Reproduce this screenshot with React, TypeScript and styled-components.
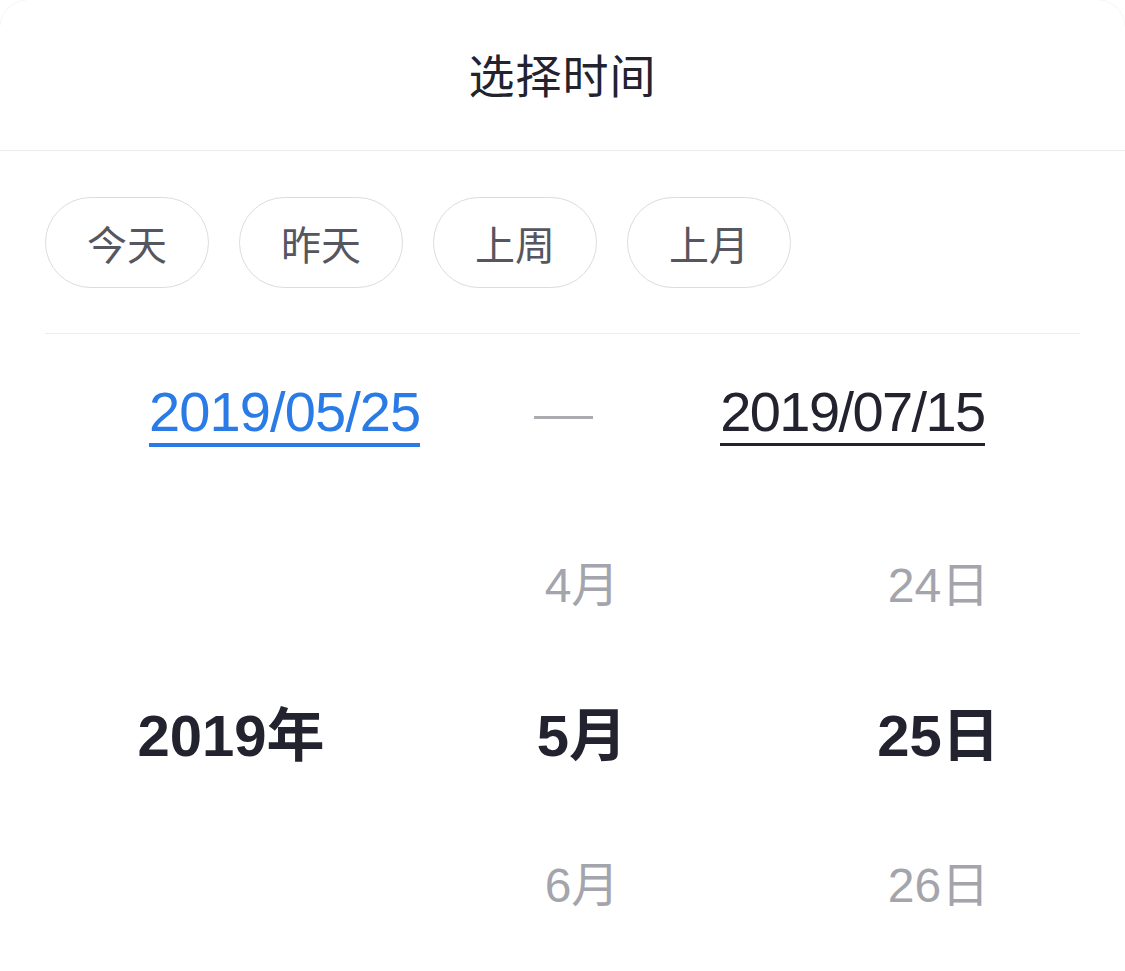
import React from "react";
import styled, { createGlobalStyle } from "styled-components";

const GlobalStyle = createGlobalStyle`
  html, body {
    margin: 0;
    padding: 0;
    background: #ffffff;
  }
  body {
    font-family: "Liberation Sans", "Noto Sans CJK SC", sans-serif;
    -webkit-font-smoothing: antialiased;
  }
`;

const Card = styled.div`
  width: 1125px;
  min-height: 971px;
  background: #ffffff;
  border-radius: 28px 28px 0 0;
  box-shadow: 0 0 1.5px rgba(0, 0, 0, 0.12);
  overflow: hidden;
`;

const Header = styled.header`
  height: 150px;
  display: flex;
  align-items: center;
  justify-content: center;
  border-bottom: 1px solid #ececee;
`;

const Title = styled.h1`
  margin: 0 0 4px;
  font-size: 46px;
  font-weight: 400;
  color: #22232e;
  letter-spacing: 1px;
`;

const Body = styled.div`
  padding: 0 45px;
`;

const ChipRow = styled.div`
  display: flex;
  gap: 30px;
  padding: 46px 0 45px;
  border-bottom: 1px solid #ececee;
`;

const Chip = styled.button`
  width: 164px;
  height: 91px;
  border: 1px solid #dcdcdf;
  border-radius: 46px;
  background: #ffffff;
  display: flex;
  align-items: center;
  justify-content: center;
  font-family: "Liberation Sans", "Noto Sans CJK SC", sans-serif;
  font-size: 40px;
  color: #55565f;
  padding: 0;
  cursor: pointer;
`;

const RangeRow = styled.div`
  display: flex;
  align-items: flex-start;
  justify-content: flex-start;
  padding: 51px 0 0 104px;
`;

const DateField = styled.div<{ $active?: boolean }>`
  font-size: 56px;
  line-height: 54px;
  letter-spacing: ${(p) => (p.$active ? "-0.9px" : "-1.6px")};
  color: ${(p) => (p.$active ? "#2a7be6" : "#22232e")};
  padding-bottom: 4px;
  border-bottom: ${(p) => (p.$active ? "4px solid #2a7be6" : "3px solid #22232e")};
`;

const Dash = styled.div`
  width: 59px;
  height: 3px;
  background: #ababb0;
  margin: 31px 127px 0 114px;
`;

const Wheel = styled.div`
  display: grid;
  grid-template-columns: 462px 240px 1fr;
  margin-top: 64px;
`;

const WheelColumn = styled.div<{ $offset?: number }>`
  display: flex;
  flex-direction: column;
  padding-left: ${(p) => p.$offset ?? 0}px;
`;

const WheelItem = styled.div<{ $selected?: boolean }>`
  height: 150px;
  line-height: 150px;
  text-align: center;
  white-space: nowrap;
  font-size: ${(p) => (p.$selected ? "58px" : "48px")};
  font-weight: ${(p) => (p.$selected ? 700 : 400)};
  color: ${(p) => (p.$selected ? "#22232e" : "#a4a4ac")};
`;

const chips = ["今天", "昨天", "上周", "上月"];

const columns: { offset: number; items: string[] }[] = [
  { offset: 0, items: ["", "2019年", ""] },
  { offset: 0, items: ["4月", "5月", "6月"] },
  { offset: 50, items: ["24日", "25日", "26日"] },
];

export default function App() {
  return (
    <>
      <GlobalStyle />
      <Card>
        <Header>
          <Title>选择时间</Title>
        </Header>
        <Body>
          <ChipRow>
            {chips.map((c) => (
              <Chip key={c}>{c}</Chip>
            ))}
          </ChipRow>
          <RangeRow>
            <DateField $active>2019/05/25</DateField>
            <Dash />
            <DateField>2019/07/15</DateField>
          </RangeRow>
        </Body>
        <Wheel>
          {columns.map((col, ci) => (
            <WheelColumn key={ci} $offset={col.offset}>
              {col.items.map((it, ii) => (
                <WheelItem key={ii} $selected={ii === 1}>
                  {it}
                </WheelItem>
              ))}
            </WheelColumn>
          ))}
        </Wheel>
      </Card>
    </>
  );
}
